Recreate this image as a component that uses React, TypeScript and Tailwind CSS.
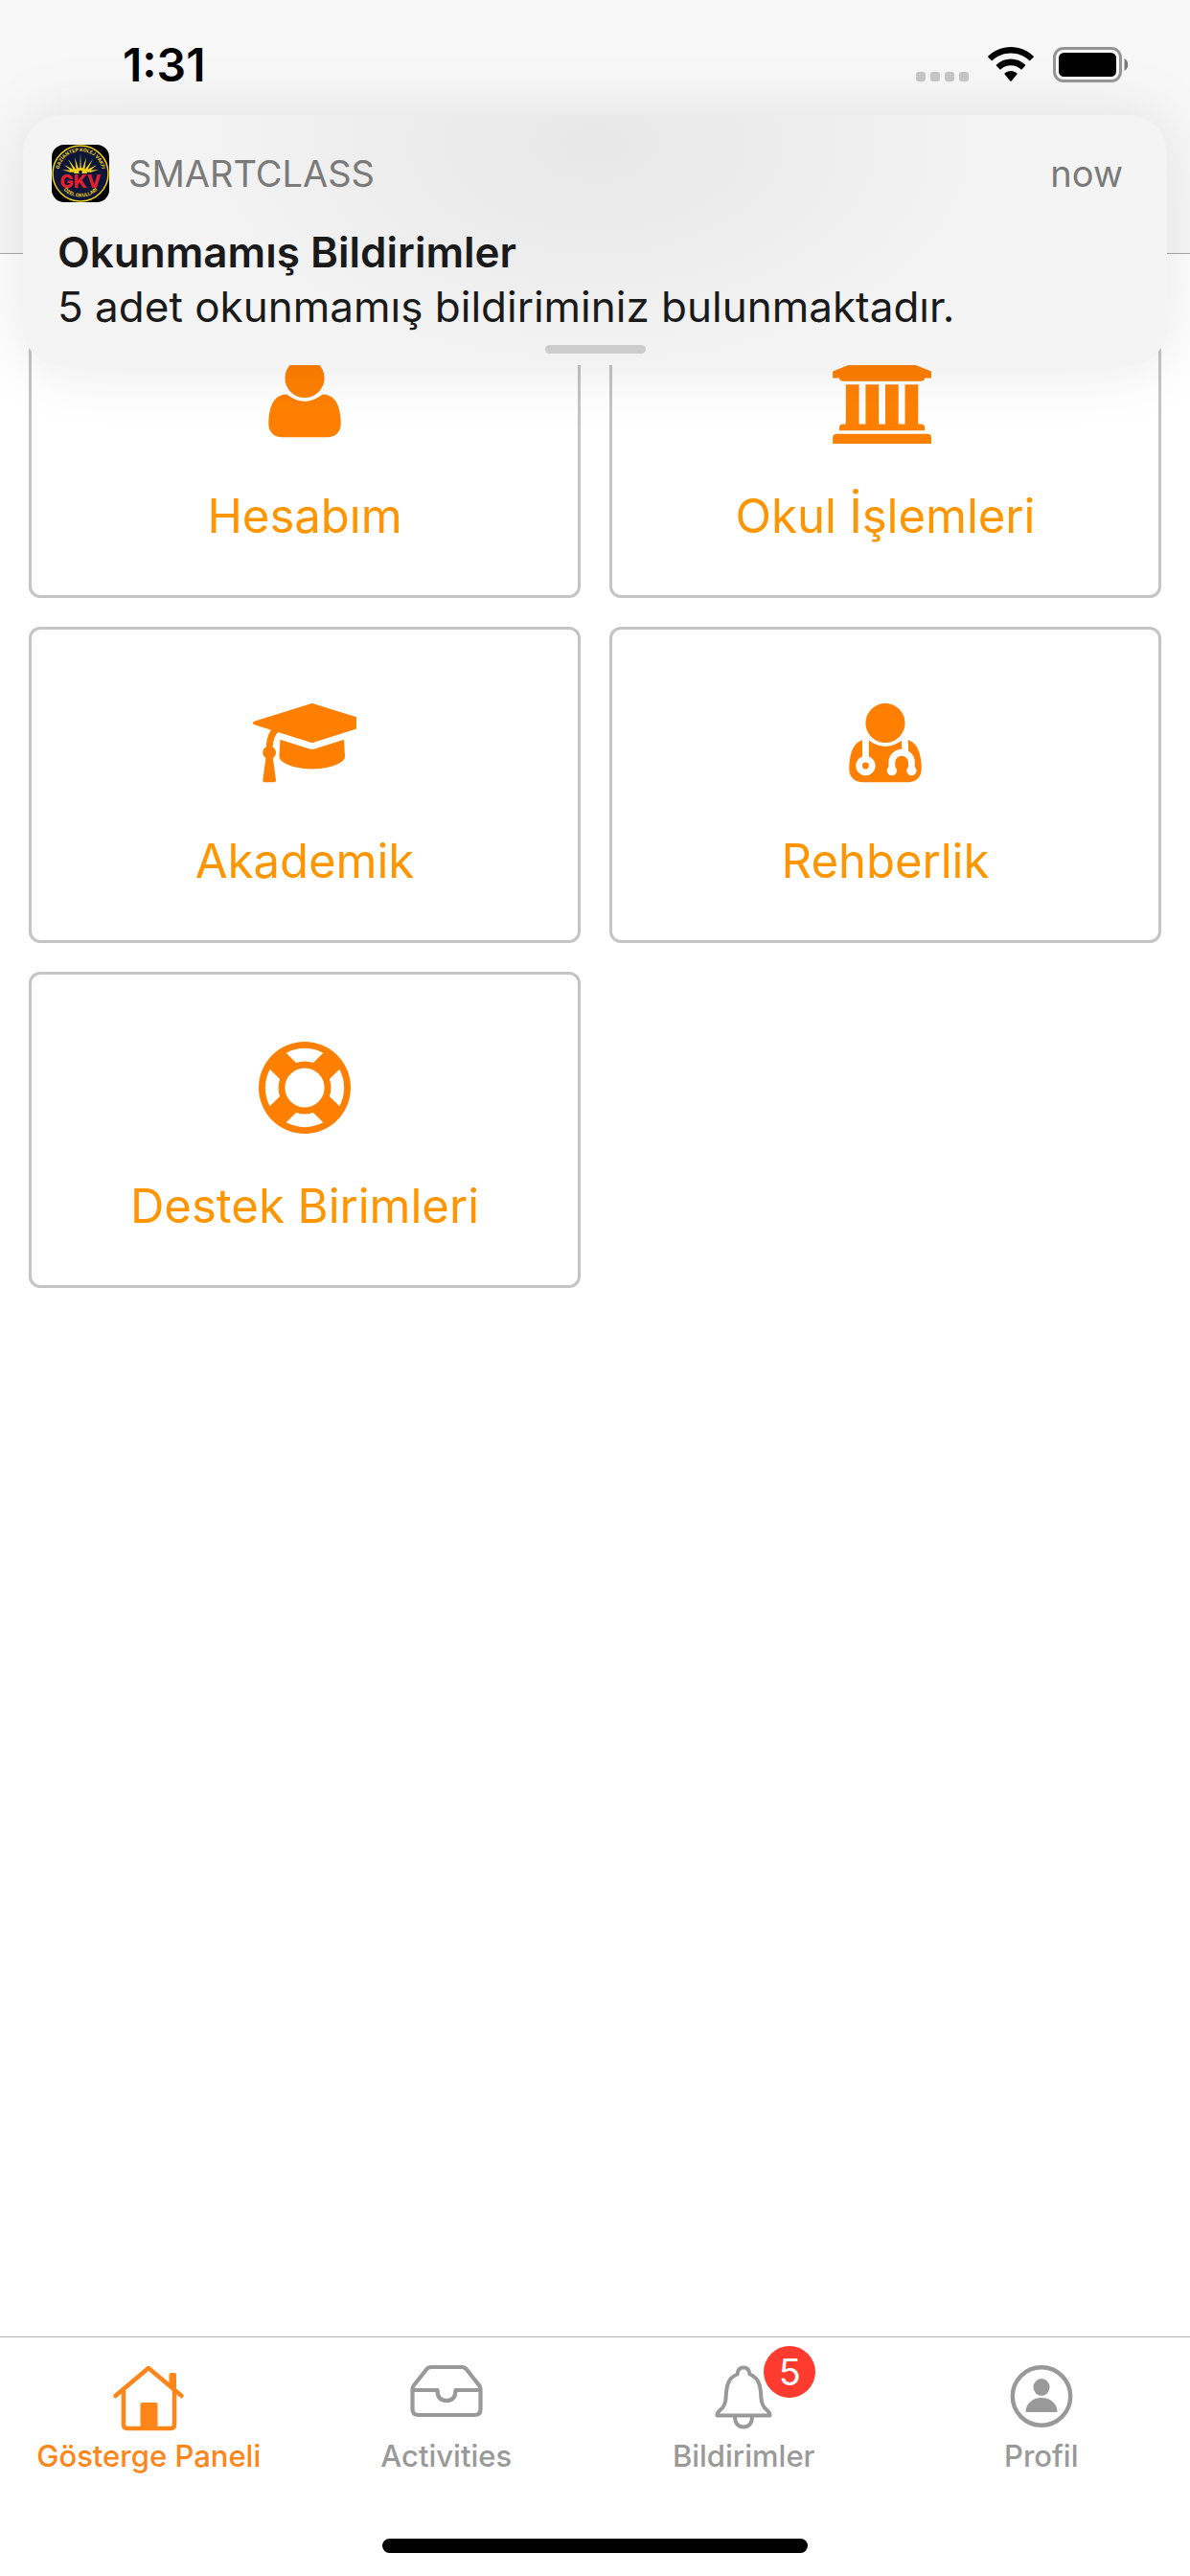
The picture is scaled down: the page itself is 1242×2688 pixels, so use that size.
import type { ReactNode } from "react";

type MenuItem = {
  label: string;
  icon: ReactNode;
};

type TabItem = {
  label: string;
  icon: ReactNode;
  active?: boolean;
  badge?: number;
};

// shoulders shared by the user and counselor icons
const BODY_PATH =
  "M1600 1405q0 120-73 189.5t-194 69.5h-874q-121 0-194-69.5t-73-189.5q0-53 3.5-103.5t14-109 26.5-108.5 43-97.5 62-81 85.5-53.5 111.5-20q9 0 42 21.5t74.5 48 108 48 133.5 21.5 133.5-21.5 108-48 74.5-48 42-21.5q61 0 111.5 20t85.5 53.5 62 81 43 97.5 26.5 108.5 14 109 3.5 103.5z";

function UserIcon() {
  return (
    <svg viewBox="0 0 1792 1792" className="h-24 w-24" fill="currentColor" aria-hidden="true">
      <path d={BODY_PATH} />
      <circle cx="896" cy="512" r="384" />
    </svg>
  );
}

function SchoolIcon() {
  return (
    <svg viewBox="0 0 2048 1792" className="h-24 w-[110px]" fill="currentColor" aria-hidden="true">
      <path d="M960 0l960 384v128h-128q0 26-20.5 45t-48.5 19h-1526q-28 0-48.5-19t-20.5-45h-128v-128zm-704 640h256v768h128v-768h256v768h128v-768h256v768h128v-768h256v768h59q28 0 48.5 19t20.5 45v64h-1664v-64q0-26 20.5-45t48.5-19h59v-768zm1595 960q28 0 48.5 19t20.5 45v128h-1920v-128q0-26 20.5-45t48.5-19h1782z" />
    </svg>
  );
}

function GraduationIcon() {
  return (
    <svg viewBox="0 0 2016 1792" className="h-24 w-[108px]" fill="currentColor" aria-hidden="true">
      <path d="M1774 836l18 316q4 69-82 128t-235 93.5-323 34.5-323-34.5-235-93.5-82-128l18-316 574 181q22 7 48 7t48-7zM2304 512q0 23-22 31l-1120 352q-4 1-10 1t-10-1l-652-206q-43 34-71 111.5t-34 178.5q63 36 63 109 0 69-58 107l58 433q2 14-8 25-9 11-24 11h-192q-15 0-24-11-10-11-8-25l58-433q-58-38-58-107 0-73 65-111 11-207 98-330l-333-104q-22-8-22-31t22-31l1120-352q4-1 10-1t10 1l1120 352q22 8 22 31z" />
    </svg>
  );
}

function CounselorIcon() {
  return (
    <svg viewBox="0 0 1792 1792" className="h-24 w-24" fill="currentColor" aria-hidden="true">
      <path d={BODY_PATH} />
      <circle cx="896" cy="512" r="384" />
      <g fill="none" stroke="white" strokeWidth="128">
        <path d="M512 800v380" />
        <circle cx="512" cy="1344" r="128" />
        <path d="M1266 810q20 100 14 260" />
        <path d="M1024 1440v-160a192 192 0 0 1 384 0v160" />
      </g>
      <circle cx="1024" cy="1440" r="96" fill="white" />
      <circle cx="1408" cy="1440" r="96" fill="white" />
    </svg>
  );
}

function LifeRingIcon() {
  return (
    <svg viewBox="0 0 1792 1792" className="h-24 w-24" fill="currentColor" aria-hidden="true">
      <path d="M896 0q182 0 348 71t286 191 191 286 71 348-71 348-191 286-286 191-348 71-348-71-286-191-191-286-71-348 71-348 191-286 286-191 348-71zm0 128q-190 0-361 90l194 194q82-28 167-28t167 28l194-194q-171-90-361-90zm-678 1129l194-194q-28-82-28-167t28-167l-194-194q-90 171-90 361t90 361zm678 407q190 0 361-90l-194-194q-82 28-167 28t-167-28l-194 194q171 90 361 90zm0-384q159 0 271.5-112.5t112.5-271.5-112.5-271.5-271.5-112.5-271.5 112.5-112.5 271.5 112.5 271.5 271.5 112.5zm484-217l194 194q90-171 90-361t-90-361l-194 194q28 82 28 167t-28 167z" />
    </svg>
  );
}

function HomeIcon() {
  return (
    <svg viewBox="0 0 90 90" className="h-[90px] w-[90px]" fill="none" stroke="currentColor" strokeWidth="4.5" strokeLinecap="round" strokeLinejoin="round" aria-hidden="true">
      <path d="M10.5 43L45 14l34.5 29" />
      <path d="M19 37v36q0 4 4 4h45q4 0 4-4V37" />
      <path d="M66.5 32V21q0-2 2-2H72q2 0 2 2v18z" fill="currentColor" stroke="none" />
      <path d="M36.5 77V52q0-2 2-2h14q2 0 2 2v25z" fill="currentColor" stroke="none" />
    </svg>
  );
}

function InboxIcon() {
  return (
    <svg viewBox="0 0 90 90" className="h-[90px] w-[90px]" fill="none" stroke="currentColor" strokeWidth="4.2" strokeLinejoin="round" aria-hidden="true">
      <path d="M9.5 36q0-2 1.5-4L24 15.5q2-2.5 5-2.5h32q3 0 5 2.5L79 32q1.5 2 1.5 4v21q0 6-6 6h-59q-6 0-6-6z" />
      <path d="M9.5 37h26q0 11 9.5 11t9.5-11h26" />
    </svg>
  );
}

function BellIcon() {
  return (
    <svg viewBox="0 0 90 90" className="h-[90px] w-[90px]" fill="none" stroke="currentColor" strokeWidth="4" strokeLinejoin="round" aria-hidden="true">
      <path d="M38.5 20.5C39 15.5 41 13.5 45 13.5s6 2 6.5 7C60 24 62 30 63 39c.5 8 .5 12 4 16.5 3 3.5 5.5 4 5.5 8h-55c0-4 2.5-4.5 5.5-8 3.5-4.5 3.5-8.5 4-16.5 1-9 3-15 11.5-18.5z" />
      <path d="M36 64.5c0 7 3.5 11 9 11s9-4 9-11" />
    </svg>
  );
}

function ProfileIcon() {
  return (
    <svg viewBox="0 0 90 90" className="h-[90px] w-[90px]" fill="currentColor" aria-hidden="true">
      <circle cx="45" cy="43.5" r="30.2" fill="none" stroke="currentColor" strokeWidth="4.4" />
      <ellipse cx="45" cy="34" rx="8.5" ry="9" />
      <path d="M28.5 60c0-9 7.5-15 16.5-15s16.5 6 16.5 15z" />
    </svg>
  );
}

function AppLogo() {
  return (
    <svg viewBox="0 0 60 60" className="h-[60px] w-[60px] rounded-[13px]" aria-hidden="true">
      <defs>
        <path id="logo-top" d="M7.6 34a22.8 22.8 0 1 1 44.8 0" />
        <path id="logo-bottom" d="M9 43a24.8 24.8 0 0 0 42 0" />
      </defs>
      <rect width="60" height="60" fill="#000" />
      <circle cx="30" cy="30" r="29" fill="#0c1638" stroke="#f5d313" strokeWidth="1.5" />
      <path
        d="M29 29L30 9l1 20zM26 29l-2-16 5 15zM34 29l2-16-5 15zM24 29L17 15l10 13zM36 29l7-14-10 13zM22 29l-9-8 12 6zM38 29l9-8-12 6zM20 29l-9-3 13 1zM40 29l9-3-13 1z"
        fill="#f3d11c"
      />
      <path d="M23 30a7 6 0 0 1 14 0z" fill="#f3d11c" />
      <circle cx="30" cy="28.5" r="1.8" fill="#0c1638" />
      <text x="30" y="45" textAnchor="middle" fontSize="19" fontWeight="800" fill="#e3202d">
        GKV
      </text>
      <text fontSize="5" fontWeight="700" fill="#f5d313" textAnchor="middle">
        <textPath href="#logo-top" startOffset="50%">GAZİANTEP KOLEJ VAKFI</textPath>
      </text>
      <text fontSize="5" fontWeight="700" fill="#f5d313" textAnchor="middle">
        <textPath href="#logo-bottom" startOffset="50%">ÖZEL OKULLARI</textPath>
      </text>
    </svg>
  );
}

function StatusBar() {
  return (
    <div className="flex items-start justify-between pt-[49px] pr-16 pl-32">
      <div className="text-[48px] leading-[38px] font-semibold text-black">1:31</div>
      <div className="flex items-start">
        <div className="mt-[26px] mr-5 flex gap-[5px]">
          {[0, 1, 2, 3].map((dot) => (
            <span key={dot} className="h-[10px] w-[10px] rounded-[3px] bg-[#c4c4c4]" />
          ))}
        </div>
        <svg viewBox="0 0 48 36" className="mr-5 h-9 w-12" aria-hidden="true">
          <path d="M24 0C33 0 41.5 3.6 47.6 9.6q.6.6 0 1.2l-3.3 3.3q-.6.6-1.2 0C38 9.3 31.3 6.6 24 6.6S10 9.3 4.9 14.1q-.6.6-1.2 0L.4 10.8q-.6-.6 0-1.2C6.5 3.6 15 0 24 0z" />
          <path d="M24 12.6c5.7 0 11 2.2 15 6q.6.6 0 1.2l-3.4 3.4q-.6.6-1.2 0c-2.8-2.6-6.4-4-10.4-4s-7.6 1.4-10.4 4q-.6.6-1.2 0L9 19.8q-.6-.6 0-1.2c4-3.8 9.3-6 15-6z" />
          <path d="M24 25c2.5 0 4.7.9 6.4 2.4q.6.6 0 1.2l-5.7 6.8q-.7.8-1.4 0l-5.7-6.8q-.6-.6 0-1.2C19.3 25.9 21.5 25 24 25z" />
        </svg>
        <svg viewBox="0 0 79 37" className="h-[37px] w-[79px]" aria-hidden="true">
          <rect x="1.5" y="1.5" width="69" height="34" rx="9.5" fill="none" stroke="#949494" strokeWidth="3" />
          <rect x="6" y="6" width="60" height="25" rx="5.5" />
          <path d="M74.5 12c5 2.5 5 10.5 0 13z" fill="#7a7a7a" />
        </svg>
      </div>
    </div>
  );
}

function NotificationBanner() {
  return (
    <section className="absolute inset-x-6 top-[120px] flex h-[261px] flex-col rounded-[39px] bg-[#f4f4f4] bg-[radial-gradient(ellipse_36%_95%_at_50%_12%,#e8e8e8_0%,#ebebeb_35%,#f4f4f4_100%)] px-[30px] pt-[30px] shadow-[0_0_70px_rgba(0,0,0,0.10)]">
      <div className="flex items-center gap-5 text-[38px] leading-[62px] text-[#7a7a7a]">
        <AppLogo />
        <span className="flex-1">SMARTCLASS</span>
        <span className="pr-4">now</span>
      </div>
      <div className="mt-[23px] px-[6px] text-[44px] leading-[57px] text-[#1a1a1a]">
        <h2 className="font-semibold">Okunmamış Bildirimler</h2>
        <p>5 adet okunmamış bildiriminiz bulunmaktadır.</p>
      </div>
      <div className="mx-auto mt-[11px] h-[9px] w-[105px] rounded-full bg-[#cdcdcd]" />
    </section>
  );
}

function MenuCard({ label, icon }: MenuItem) {
  return (
    <button
      type="button"
      className="flex h-[330px] flex-col items-center rounded-xl border-[3px] border-[#c4c4c4] bg-white pt-[70px] text-[#ff8000]"
    >
      {icon}
      <span className="mt-[46px] text-[49px] leading-[60px] text-[#ff9500]">{label}</span>
    </button>
  );
}

function TabButton({ label, icon, active, badge }: TabItem) {
  return (
    <button
      type="button"
      aria-current={active ? "page" : undefined}
      className={`flex flex-col items-center ${active ? "text-[#ff8519]" : "text-[#999999]"}`}
    >
      <span className="relative">
        {icon}
        {badge !== undefined && (
          <span className="absolute -top-[9px] left-[66px] flex h-[54px] w-[54px] items-center justify-center rounded-full bg-[#ff3b30] text-[38px] leading-none text-white">
            {badge}
          </span>
        )}
      </span>
      <span className="-mt-1 text-[31px] leading-[40px] font-medium">{label}</span>
    </button>
  );
}

const menuItems: MenuItem[] = [
  { label: "Hesabım", icon: <UserIcon /> },
  { label: "Okul İşlemleri", icon: <SchoolIcon /> },
  { label: "Akademik", icon: <GraduationIcon /> },
  { label: "Rehberlik", icon: <CounselorIcon /> },
  { label: "Destek Birimleri", icon: <LifeRingIcon /> },
];

const tabs: TabItem[] = [
  { label: "Gösterge Paneli", icon: <HomeIcon />, active: true },
  { label: "Activities", icon: <InboxIcon /> },
  { label: "Bildirimler", icon: <BellIcon />, badge: 5 },
  { label: "Profil", icon: <ProfileIcon /> },
];

export default function App() {
  return (
    <div className="relative flex min-h-screen flex-col overflow-hidden bg-white font-['Inter','Liberation_Sans',sans-serif]">
      <header className="h-[264px] bg-[#f8f8f8]" />

      <main className="flex-1 border-t border-[#a7a7a7] px-[30px] pt-[29px]">
        <div className="grid grid-cols-2 gap-[30px]">
          {menuItems.map((item) => (
            <MenuCard key={item.label} {...item} />
          ))}
        </div>
      </main>

      <footer className="border-t border-[#b2b2b2] bg-white pt-[18px] pb-6">
        <nav className="grid grid-cols-4">
          {tabs.map((tab) => (
            <TabButton key={tab.label} {...tab} />
          ))}
        </nav>
        <div className="mx-auto mt-[66px] h-[15px] w-[444px] rounded-full bg-black" />
      </footer>

      <NotificationBanner />
      <div className="absolute inset-x-0 top-0">
        <StatusBar />
      </div>
    </div>
  );
}
